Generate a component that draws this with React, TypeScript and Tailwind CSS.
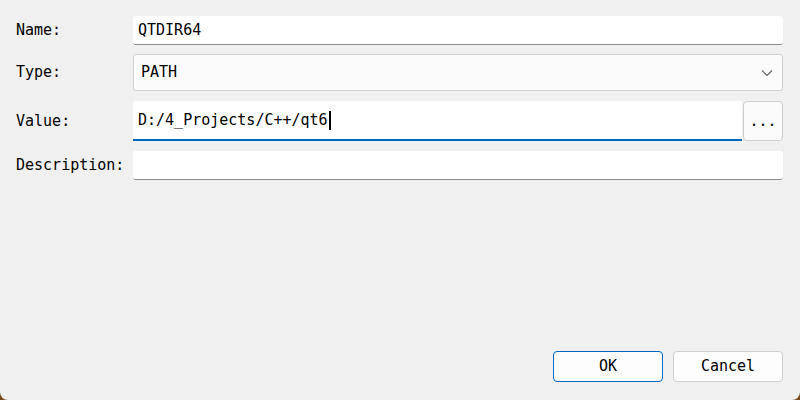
import React from 'react'

const mono = { fontFamily: '"DejaVu Sans Mono", "Liberation Mono", monospace' }

function Label({ children }: { children: React.ReactNode }) {
  return <div className="w-[117px] shrink-0 text-[15px] text-black">{children}</div>
}

export default function App() {
  return (
    <div className="w-[800px] h-[400px] bg-[#7a4a20]">
      <div
        className="w-full h-full bg-[#f0f0f0] rounded-b-[8px] flex flex-col pl-4 pr-[17px] pt-4 pb-[18px]"
        style={mono}
      >
        <div className="flex flex-col">
          {/* Name */}
          <div className="flex items-center h-[29px]">
            <Label>Name:</Label>
            <div className="flex-1 h-full bg-white border-b border-[#8a8a8a] rounded-[3px] flex items-center pl-[5px] text-[15px] text-black">
              QTDIR64
            </div>
          </div>

          {/* Type */}
          <div className="flex items-center h-[37px] mt-[9px]">
            <Label>Type:</Label>
            <div className="flex-1 h-full bg-[#fbfbfb] border border-[#d0d0d0] rounded-[3px] flex items-center pl-[7px] pr-[9px] text-[15px] text-black">
              <span className="flex-1">PATH</span>
              <svg width="12" height="8" viewBox="0 0 12 8" fill="none">
                <path d="M1 1.5 L6 6.5 L11 1.5" stroke="#5f5f5f" strokeWidth="1.1" />
              </svg>
            </div>
          </div>

          {/* Value */}
          <div className="flex items-center h-[40px] mt-[10px]">
            <Label>Value:</Label>
            <div className="flex-1 h-full bg-white border-b-2 border-[#0067c0] rounded-t-[3px] flex items-center pl-[5px] text-[15px] text-black">
              D:/4_Projects/C++/qt6
              <span className="inline-block w-[2px] h-[19px] bg-black ml-[1px]" />
            </div>
            <button className="w-[40px] h-full ml-[1px] bg-[#fbfbfb] border border-[#cfcfcf] rounded-[4px] flex items-center justify-center text-[15px] text-black">
              ...
            </button>
          </div>

          {/* Description */}
          <div className="flex items-center h-[29px] mt-[10px]">
            <Label>Description:</Label>
            <div className="flex-1 h-full bg-white border-b border-[#8a8a8a] rounded-[3px]" />
          </div>
        </div>

        <div className="flex-1" />

        <div className="flex justify-end gap-[10px]">
          <button className="w-[110px] h-[31px] bg-[#fdfdfd] border border-[#0067c0] rounded-[4px] text-[15px] text-black">
            OK
          </button>
          <button className="w-[110px] h-[31px] bg-[#fdfdfd] border border-[#d0d0d0] rounded-[4px] text-[15px] text-black">
            Cancel
          </button>
        </div>
      </div>
    </div>
  )
}
